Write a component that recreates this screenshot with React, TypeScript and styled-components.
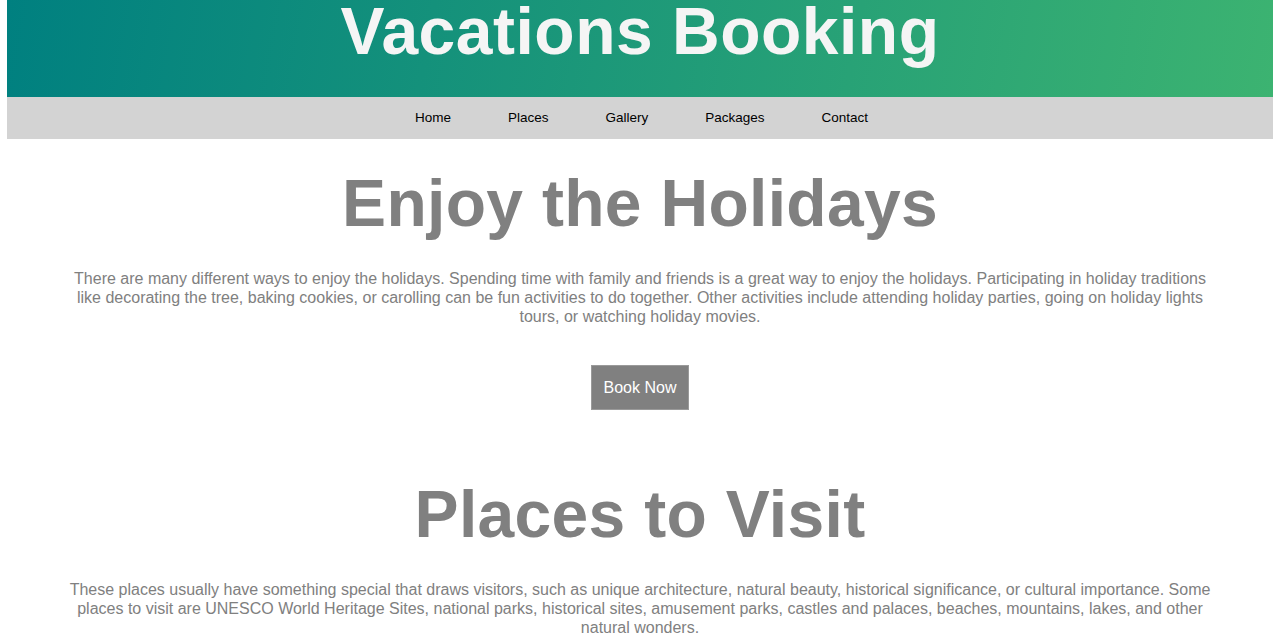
import React from 'react';
import styled, { createGlobalStyle } from 'styled-components';

const GlobalStyle = createGlobalStyle`
  html, body {
    margin: 0;
    padding: 0;
    background: #fff;
  }
  body {
    margin: 0 7px;
    font-family: "Liberation Sans", Arial, sans-serif;
  }
`;

const navLinks = ['Home', 'Places', 'Gallery', 'Packages', 'Contact'];

const sections = [
  {
    title: 'Enjoy the Holidays',
    text: 'There are many different ways to enjoy the holidays. Spending time with family and friends is a great way to enjoy the holidays. Participating in holiday traditions like decorating the tree, baking cookies, or carolling can be fun activities to do together. Other activities include attending holiday parties, going on holiday lights tours, or watching holiday movies.',
    button: 'Book Now',
  },
  {
    title: 'Places to Visit',
    text: 'These places usually have something special that draws visitors, such as unique architecture, natural beauty, historical significance, or cultural importance. Some places to visit are UNESCO World Heritage Sites, national parks, historical sites, amusement parks, castles and palaces, beaches, mountains, lakes, and other natural wonders.',
  },
];

const App: React.FC = () => {
  return (
    <>
      <GlobalStyle />
      <Header>
        <Title>Vacations Booking</Title>
      </Header>
      <Nav>
        {navLinks.map((link) => (
          <NavLink key={link} href="#">{link}</NavLink>
        ))}
      </Nav>
      <Main>
        {sections.map((section, idx) => (
          <Section key={section.title} first={idx === 0}>
            <Heading>{section.title}</Heading>
            <Text>{section.text}</Text>
            {section.button && <BookButton>{section.button}</BookButton>}
          </Section>
        ))}
      </Main>
    </>
  );
};

export default App;

const Header = styled.header`
  height: 97px;
  background: linear-gradient(100deg, #008080, #3cb371);
  display: flex;
  justify-content: center;
  align-items: flex-start;
  box-sizing: border-box;
  padding-top: 1px;
`;

const Title = styled.h1`
  margin: 0;
  font-size: 66px;
  font-weight: 700;
  letter-spacing: 0.5px;
  color: #f5f5f5;
  line-height: 60px;
`;

const Nav = styled.nav`
  height: 42px;
  background-color: #d3d3d3;
  display: flex;
  justify-content: center;
  align-items: center;
  gap: 57px;
  padding: 0 0 2px 3px;
  box-sizing: border-box;
`;

const NavLink = styled.a`
  font-size: 13.5px;
  color: #000;
  text-decoration: none;
`;

const Main = styled.main`
  display: flex;
  flex-direction: column;
`;

const Section = styled.section<{ first: boolean }>`
  display: flex;
  flex-direction: column;
  align-items: center;
  padding: ${(p) => (p.first ? '27px' : '67px')} 56px 0;
`;

const Heading = styled.h2`
  margin: 0;
  font-size: 66px;
  font-weight: 700;
  letter-spacing: 0.3px;
  line-height: 75px;
  color: #808080;
`;

const Text = styled.p`
  margin: 28px 0 0;
  font-size: 16px;
  line-height: 19px;
  color: #808080;
  text-align: center;
`;

const BookButton = styled.button`
  margin-top: 39px;
  padding: 12px 12px;
  font-family: "Liberation Sans", Arial, sans-serif;
  font-size: 16px;
  line-height: 19px;
  color: #fff;
  background-color: #808080;
  border: 1px solid #9a9a9a;
  cursor: pointer;
`;
